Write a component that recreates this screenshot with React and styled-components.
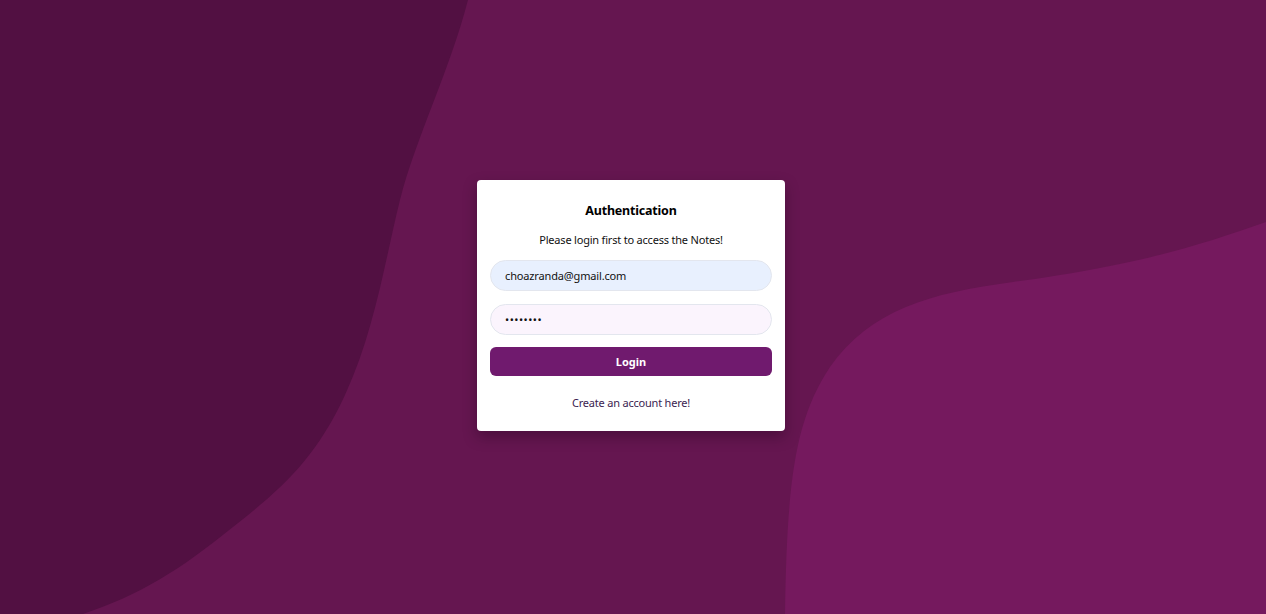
import React from "react";
import styled, { createGlobalStyle } from "styled-components";

const GlobalStyle = createGlobalStyle`
  html, body { margin: 0; padding: 0; }
  body { font-family: "Noto Sans", "Open Sans", sans-serif; }
  * { box-sizing: border-box; }
`;

const Page = styled.main`
  position: relative;
  width: 100%;
  height: 100vh;
  min-height: 614px;
  overflow: hidden;
  background: #651650;
  display: flex;
  align-items: center;
  justify-content: center;
`;

const Backdrop = styled.svg`
  position: absolute;
  inset: 0;
  width: 100%;
  height: 100%;
  z-index: 0;
`;

const Card = styled.section`
  position: relative;
  z-index: 1;
  width: 308px;
  margin: -3px 4px 0 0;
  background: #ffffff;
  border-radius: 4px;
  box-shadow: 0 6px 14px rgba(30, 0, 25, 0.35);
  padding: 22px 13px 20px;
  display: flex;
  flex-direction: column;
  align-items: stretch;
`;

const Title = styled.h1`
  margin: 0;
  text-align: center;
  font-size: 12.5px;
  font-weight: 700;
  letter-spacing: -0.2px;
  color: #000;
  line-height: 18px;
`;

const Subtitle = styled.p`
  margin: 12px 0 0;
  text-align: center;
  font-size: 11px;
  letter-spacing: -0.2px;
  color: #111;
  line-height: 16px;
`;

const Form = styled.form`
  margin-top: 12px;
  display: flex;
  flex-direction: column;
  gap: 13px;
`;

const Input = styled.input`
  height: 31px;
  width: 100%;
  border: 1px solid #e3e6ee;
  border-radius: 999px;
  padding: 0 14px;
  background: ${(p) => p.$bg};
  font-family: inherit;
  font-size: 11px;
  letter-spacing: ${(p) => (p.type === "password" ? "0.5px" : "-0.15px")};
  color: #111;
  outline: none;
`;

const Button = styled.button`
  height: 29px;
  width: 100%;
  margin-top: -1px;
  border: none;
  border-radius: 6px;
  background: #701a6e;
  color: #fff;
  font-family: inherit;
  font-weight: 700;
  font-size: 11px;
  cursor: pointer;
`;

const LinkText = styled.a`
  margin-top: 19px;
  text-align: center;
  font-size: 11px;
  letter-spacing: -0.2px;
  color: #3b1d50;
  text-decoration: none;
  line-height: 16px;
`;

export default function App() {
  return (
    <>
      <GlobalStyle />
      <Page>
        <Backdrop viewBox="0 0 1266 614" preserveAspectRatio="none" aria-hidden="true">
          <path
            d="M0,0 H468 C450,70 415,140 400,200 C385,260 375,330 345,395 C315,460 280,490 233,527 C180,570 140,595 83,614 H0 Z"
            fill="#521042"
          />
          <path
            d="M1266,222 C1200,245 1140,265 1013,282 C930,293 870,310 830,367 C795,420 787,480 785,614 H1266 Z"
            fill="#75195e"
          />
        </Backdrop>
        <Card>
          <Title>Authentication</Title>
          <Subtitle>Please login first to access the Notes!</Subtitle>
          <Form onSubmit={(e) => e.preventDefault()}>
            <Input type="email" $bg="#e8f0fe" defaultValue="choazranda@gmail.com" />
            <Input type="password" $bg="#fbf4fd" defaultValue="password" />
            <Button type="submit">Login</Button>
          </Form>
          <LinkText href="#">Create an account here!</LinkText>
        </Card>
      </Page>
    </>
  );
}
